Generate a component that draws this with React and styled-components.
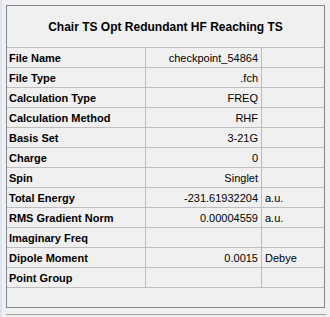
import React from "react";
import styled, { createGlobalStyle } from "styled-components";

const GlobalStyle = createGlobalStyle`
  html, body {
    margin: 0;
    padding: 0;
    background: #f0f0f0;
  }
  body {
    font-family: "Liberation Sans", Arial, sans-serif;
    color: #000;
  }
`;

const Window = styled.div`
  display: flex;
  width: 330px;
  height: 317px;
  background: #f0f0f0;
  overflow: hidden;
`;

const EdgeStrip = styled.div`
  width: 2px;
  flex: none;
  background: #dbe5f1;
`;

const Content = styled.div`
  display: flex;
  flex-direction: column;
  padding: 5px 0 0 4px;
  flex: 1;
`;

const Panel = styled.div`
  box-sizing: border-box;
  width: 319px;
  height: 303px;
  border: 1px solid #828790;
  background: #f0f0f0;
  display: flex;
  flex-direction: column;
`;

const Title = styled.div`
  height: 41px;
  border-bottom: 1px solid #bdbdbd;
  display: flex;
  align-items: center;
  justify-content: center;
  font-size: 12px;
  font-weight: bold;
`;

const Grid = styled.div`
  display: grid;
  grid-template-columns: 139px 116px 1fr;
  grid-auto-rows: 20px;
`;

const Cell = styled.div`
  box-sizing: border-box;
  border-bottom: 1px solid #bdbdbd;
  border-right: ${(p) => (p.$last ? "none" : "1px solid #bdbdbd")};
  display: flex;
  align-items: center;
  justify-content: ${(p) => (p.$align === "right" ? "flex-end" : "flex-start")};
  padding: ${(p) => (p.$align === "right" ? "0 3px 0 0" : p.$bold ? "0 0 0 2px" : "0 0 0 3px")};
  font-size: 11px;
  font-weight: ${(p) => (p.$bold ? "bold" : "normal")};
  white-space: nowrap;
  overflow: hidden;
`;

const Divider = styled.div`
  margin-top: 6px;
  width: 320px;
  height: 1px;
  background: #a0a0a0;
`;

const rows = [
  ["File Name", "checkpoint_54864", ""],
  ["File Type", ".fch", ""],
  ["Calculation Type", "FREQ", ""],
  ["Calculation Method", "RHF", ""],
  ["Basis Set", "3-21G", ""],
  ["Charge", "0", ""],
  ["Spin", "Singlet", ""],
  ["Total Energy", "-231.61932204", "a.u."],
  ["RMS Gradient Norm", "0.00004559", "a.u."],
  ["Imaginary Freq", "", ""],
  ["Dipole Moment", "0.0015", "Debye"],
  ["Point Group", "", ""],
];

export default function App() {
  return (
    <>
      <GlobalStyle />
      <Window>
        <EdgeStrip />
        <Content>
          <Panel>
            <Title>Chair TS Opt Redundant HF Reaching TS</Title>
            <Grid>
              {rows.map(([label, value, unit]) => (
                <React.Fragment key={label}>
                  <Cell $bold>{label}</Cell>
                  <Cell $align="right">{value}</Cell>
                  <Cell $last>{unit}</Cell>
                </React.Fragment>
              ))}
            </Grid>
          </Panel>
          <Divider />
        </Content>
      </Window>
    </>
  );
}
